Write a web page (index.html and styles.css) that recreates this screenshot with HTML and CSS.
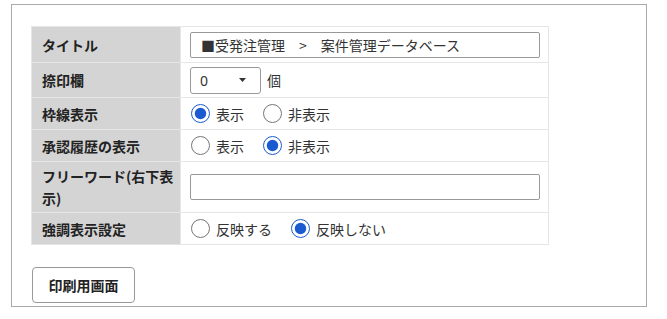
FILE: index.html
```html
<!DOCTYPE html>
<html lang="ja">
<head>
<meta charset="utf-8">
<title>印刷設定</title>
<link rel="stylesheet" href="styles.css">
</head>
<body>
<div class="panel">
  <table class="form">
    <tr class="row-title">
      <th>タイトル</th>
      <td><input class="text-input" type="text" value="■受発注管理　&gt;　案件管理データベース"></td>
    </tr>
    <tr class="row-select">
      <th>捺印欄</th>
      <td>
        <div class="inline">
          <div class="select"><span class="select-value">0</span><svg class="caret" width="7" height="4" viewBox="0 0 7 4"><path d="M0 0H7L3.5 4Z" fill="#333"/></svg></div>
          <span class="unit">個</span>
        </div>
      </td>
    </tr>
    <tr class="row-radio">
      <th>枠線表示</th>
      <td>
        <div class="inline">
          <label class="opt"><input type="radio" name="waku" checked><span>表示</span></label>
          <label class="opt"><input type="radio" name="waku"><span>非表示</span></label>
        </div>
      </td>
    </tr>
    <tr class="row-radio">
      <th>承認履歴の表示</th>
      <td>
        <div class="inline">
          <label class="opt"><input type="radio" name="rireki"><span>表示</span></label>
          <label class="opt"><input type="radio" name="rireki" checked><span>非表示</span></label>
        </div>
      </td>
    </tr>
    <tr class="row-free">
      <th>フリーワード(右下表示)</th>
      <td><input class="text-input" type="text" value=""></td>
    </tr>
    <tr class="row-radio">
      <th>強調表示設定</th>
      <td>
        <div class="inline">
          <label class="opt"><input type="radio" name="kyocho"><span>反映する</span></label>
          <label class="opt"><input type="radio" name="kyocho" checked><span>反映しない</span></label>
        </div>
      </td>
    </tr>
  </table>
  <div class="actions">
    <button class="btn" type="button">印刷用画面</button>
  </div>
</div>
</body>
</html>
```
FILE: styles.css
```css
html, body {
  margin: 0;
  padding: 0;
  background: #fff;
}
body {
  font-family: "Noto Sans CJK JP", "Noto Sans", sans-serif;
  font-size: 14px;
  color: #333;
}
.panel {
  box-sizing: border-box;
  width: 636px;
  margin: 4px 0 0 11px;
  border: 1px solid #aaa;
  padding: 21px 19px 3px 19px;
}
.form {
  border-collapse: collapse;
  width: 518px;
}
.form th, .form td {
  border: 1px solid #e6e6e6;
  padding: 0;
  vertical-align: middle;
}
.form th {
  width: 134px;
  background: #d4d4d4;
  color: #222;
  font-weight: bold;
  text-align: left;
  padding: 0 6px 0 10px;
  line-height: 22px;
}
.form td {
  background: #fff;
  padding: 0 8px 0 9px;
}
.row-title th, .row-title td { height: 35px; }
.row-select th, .row-select td { height: 34px; }
.row-radio th, .row-radio td { height: 31px; }
.row-free th, .row-free td { height: 50px; }

.text-input {
  box-sizing: border-box;
  display: block;
  width: 350px;
  height: 26px;
  margin: 0;
  border: 1px solid #999;
  border-radius: 2px;
  padding: 0 10px;
  font-family: "Noto Sans CJK JP", "Noto Sans", sans-serif;
  font-size: 14px;
  color: #333;
  background: #fff;
  outline: none;
}
.inline {
  display: flex;
  align-items: center;
}
.select {
  box-sizing: border-box;
  width: 71px;
  height: 27px;
  border: 1px solid #999;
  border-radius: 3px;
  display: flex;
  align-items: center;
  justify-content: space-between;
  padding: 0 14px 0 9px;
  background: #fff;
}
.select-value {
  font-family: "Noto Sans", sans-serif;
  font-size: 14px;
  color: #333;
}
.caret {
  display: block;
}
.unit {
  margin-left: 6px;
}
.opt {
  display: flex;
  align-items: center;
  margin-right: 18px;
  line-height: 20px;
}
.opt input {
  width: 19px;
  height: 19px;
  margin: 0 6px 0 1px;
  accent-color: #1a5bd1;
}
.actions {
  margin-top: 22px;
}
.btn {
  box-sizing: border-box;
  width: 103px;
  height: 36px;
  margin-left: 1px;
  border: 1px solid #999;
  border-radius: 4px;
  background: #fff;
  font-family: "Noto Sans CJK JP", "Noto Sans", sans-serif;
  font-size: 14px;
  font-weight: bold;
  color: #222;
  padding: 0;
}
```
